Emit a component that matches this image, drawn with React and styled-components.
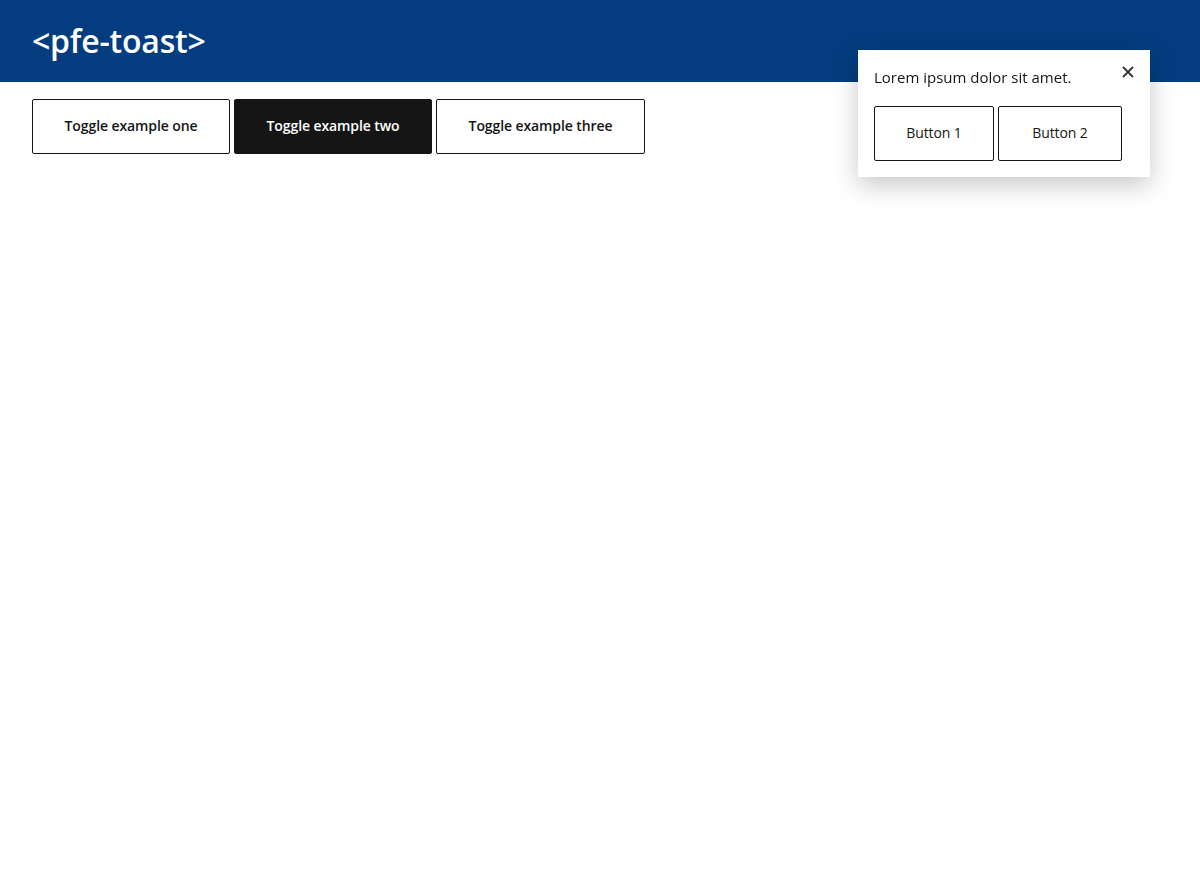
import React from 'react'
import styled, { createGlobalStyle } from 'styled-components'

const GlobalStyle = createGlobalStyle`
  body {
    margin: 0;
    font-family: "Open Sans", "Liberation Sans", sans-serif;
    background: #fff;
    color: #151515;
  }
`

const Header = styled.header`
  background-color: #033d7f;
  height: 82px;
  display: flex;
  align-items: center;
  padding: 0 32px;
`

const Title = styled.h1`
  margin: 0;
  color: #fff;
  font-family: "Open Sans", sans-serif;
  font-size: 32px;
  font-weight: 600;
  letter-spacing: -0.2px;
  padding-bottom: 2px;
`

const Toolbar = styled.div`
  display: flex;
  gap: 4px;
  padding: 17px 32px;
`

const Button = styled.button`
  box-sizing: border-box;
  height: 55px;
  padding: 0 0 2px;
  width: ${props => props.width}px;
  border: 1px solid #151515;
  border-radius: 2px;
  background: ${props => (props.active ? '#151515' : '#fff')};
  color: ${props => (props.active ? '#fff' : '#151515')};
  font-family: "Open Sans", sans-serif;
  font-size: 14px;
  font-weight: ${props => props.weight || 600};
  letter-spacing: -0.1px;
  cursor: pointer;
`

const Toast = styled.div`
  position: fixed;
  top: 50px;
  right: 50px;
  width: 292px;
  box-sizing: border-box;
  padding: 16px;
  background: #fff;
  box-shadow: 0 8px 24px rgba(0, 0, 0, 0.22);
`

const ToastHead = styled.div`
  display: flex;
  justify-content: space-between;
  align-items: flex-start;
  margin-bottom: 18px;
`

const Message = styled.p`
  margin: 0;
  font-size: 15px;
  line-height: 22px;
  color: #151515;
`

const Close = styled.button`
  border: 0;
  background: none;
  padding: 0;
  margin-top: 0;
  width: 12px;
  height: 12px;
  display: flex;
  cursor: pointer;
`

const Actions = styled.div`
  display: flex;
  gap: 4px;
`

export default function App() {
  return (
    <>
      <GlobalStyle />
      <Header>
        <Title>&lt;pfe-toast&gt;</Title>
      </Header>
      <Toolbar>
        <Button width={198}>Toggle example one</Button>
        <Button width={198} active>Toggle example two</Button>
        <Button width={209}>Toggle example three</Button>
      </Toolbar>
      <Toast>
        <ToastHead>
          <Message>Lorem ipsum dolor sit amet.</Message>
          <Close aria-label="Close">
            <svg width="12" height="12" viewBox="0 0 12 12">
              <path d="M1 1L11 11M11 1L1 11" stroke="#333" strokeWidth="1.8" />
            </svg>
          </Close>
        </ToastHead>
        <Actions>
          <Button width={120} weight={500}>Button 1</Button>
          <Button width={124} weight={500}>Button 2</Button>
        </Actions>
      </Toast>
    </>
  )
}
